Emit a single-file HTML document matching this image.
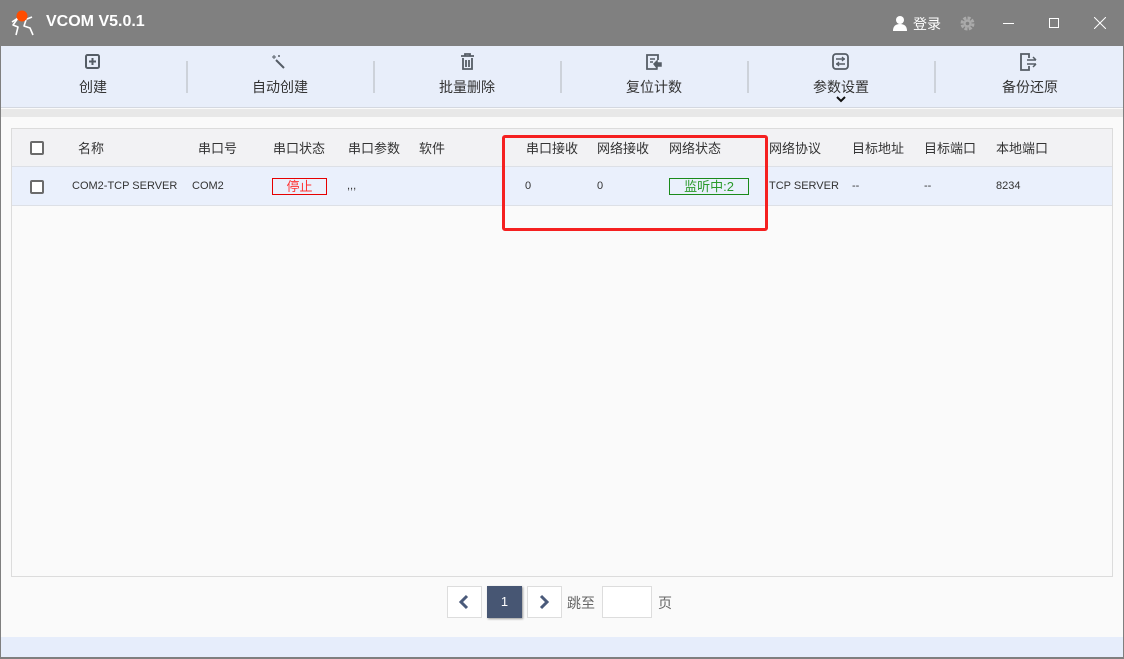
<!DOCTYPE html>
<html><head><meta charset="utf-8"><style>
*{margin:0;padding:0;box-sizing:border-box}
body{width:1124px;height:659px;overflow:hidden;background:#fafafa;font-family:"Liberation Sans","Noto Sans CJK SC",sans-serif;position:relative;color:#333}
.a{position:absolute}
.t{font-size:13px;white-space:nowrap}
</style></head><body>
<div class="a" style="left:0;top:0;width:1124px;height:659px;border:1px solid #7f7f7f;border-bottom-width:2px;border-top:none"></div>
<div class="a" style="left:0;top:0;width:1124px;height:46px;background:#808080"></div>
<svg class="a" style="left:9px;top:9px" width="30" height="28" viewBox="0 0 30 28"><path d="M3 13 L9 9 L18 10 L23 8 M9 9 L4 16 L9 18 L7 26 M17 11 L15 17 L21 19 L24 26" stroke="#fff" stroke-width="1.6" fill="none" stroke-linejoin="round"/><circle cx="13" cy="7" r="5.5" fill="#ff4c00"/></svg>
<div class="a" style="left:46px;top:13px;color:#fff;font-size:16px;font-weight:bold">VCOM V5.0.1</div>
<svg class="a" style="left:892px;top:15px" width="16" height="16"><circle cx="8" cy="5" r="4" fill="#fff"/><path d="M1 16 Q1 9 8 9 Q15 9 15 16Z" fill="#fff"/></svg>
<div class="a t" style="left:913px;top:14px;color:#fff;font-size:14px">登录</div>
<svg class="a" style="left:959px;top:15px" width="17" height="17" viewBox="0 0 17 17"><circle cx="8.5" cy="8.5" r="5.5" fill="none" stroke="#aaa" stroke-width="3" stroke-dasharray="3 1.3"/><circle cx="8.5" cy="8.5" r="4" fill="#aaa"/><circle cx="8.5" cy="8.5" r="1.8" fill="#808080"/></svg>
<div class="a" style="left:1003px;top:23px;width:11px;height:1px;background:#fff"></div>
<div class="a" style="left:1049px;top:18px;width:10px;height:10px;border:1px solid #fff"></div>
<svg class="a" style="left:1094px;top:17px" width="12" height="12"><path d="M0 0L12 12M12 0L0 12" stroke="#fff" stroke-width="1"/></svg>
<div class="a" style="left:1px;top:46px;width:1122px;height:62px;background:#e8eefa;border-bottom:1px solid #d4d8e0"></div>
<div class="a" style="left:1px;top:109px;width:1122px;height:8px;background:#e8e8e8"></div>
<div class="a" style="left:186px;top:61px;width:2px;height:32px;background:#cdd2da"></div>
<div class="a" style="left:373px;top:61px;width:2px;height:32px;background:#cdd2da"></div>
<div class="a" style="left:560px;top:61px;width:2px;height:32px;background:#cdd2da"></div>
<div class="a" style="left:747px;top:61px;width:2px;height:32px;background:#cdd2da"></div>
<div class="a" style="left:934px;top:61px;width:2px;height:32px;background:#cdd2da"></div>
<svg class="a" style="left:85px;top:54px" width="16" height="16"><rect x="1" y="1" width="13" height="13" rx="1.5" fill="none" stroke="#555d66" stroke-width="2"/><path d="M7.5 4v7M4 7.5h7" stroke="#555d66" stroke-width="2"/></svg>
<div class="a t" style="left:79px;top:77px;font-size:14px">创建</div>
<svg class="a" style="left:271px;top:54px" width="16" height="16"><path d="M5 6L13 14" stroke="#555d66" stroke-width="2"/><path d="M3 1v4M1 3h4M8 1v2M7 2h2" stroke="#555d66" stroke-width="1"/></svg>
<div class="a t" style="left:252px;top:77px;font-size:14px">自动创建</div>
<svg class="a" style="left:459px;top:53px" width="18" height="18"><path d="M2 3h13M6 3V1h5v2M4 5v11h9V5M7 7v7M10 7v7" stroke="#555d66" stroke-width="1.8" fill="none"/></svg>
<div class="a t" style="left:439px;top:77px;font-size:14px">批量删除</div>
<svg class="a" style="left:645px;top:53px" width="18" height="18"><path d="M12 16H2V2h11v5" stroke="#555d66" stroke-width="1.8" fill="none"/><path d="M5 6h5M5 9h3M9 11l3-3v2h4v3h-4v2z" stroke="#555d66" stroke-width="1.5" fill="#555d66"/></svg>
<div class="a t" style="left:626px;top:77px;font-size:14px">复位计数</div>
<svg class="a" style="left:832px;top:53px" width="18" height="18"><rect x="1" y="1" width="15" height="15" rx="3" fill="none" stroke="#555d66" stroke-width="1.8"/><path d="M4 6h9M4 11h9" stroke="#555d66" stroke-width="1.5"/><path d="M10 4l2 2-2 2M7 9l-2 2 2 2" stroke="#555d66" stroke-width="1.3" fill="none"/></svg>
<div class="a t" style="left:813px;top:77px;font-size:14px">参数设置</div>
<svg class="a" style="left:836px;top:96px" width="10" height="7"><path d="M1 1l4 4 4-4" stroke="#111" stroke-width="2" fill="none"/></svg>
<svg class="a" style="left:1019px;top:53px" width="20" height="18"><path d="M10 5V1H2v16h8v-4" stroke="#555d66" stroke-width="1.8" fill="none"/><path d="M8 7h9M8 11h9M14 4l3 3M14 14l3-3" stroke="#555d66" stroke-width="1.5" fill="none"/></svg>
<div class="a t" style="left:1002px;top:77px;font-size:14px">备份还原</div>
<div class="a" style="left:11px;top:128px;width:1102px;height:449px;border:1px solid #dcdcdc;background:#fafafa"></div>
<div class="a" style="left:12px;top:129px;width:1100px;height:38px;background:#f2f2f4;border-bottom:1px solid #dde0e6"></div>
<div class="a" style="left:12px;top:167px;width:1100px;height:39px;background:#eaf0fc;border-bottom:1px solid #dde0e6"></div>
<div class="a" style="left:30px;top:141px;width:14px;height:14px;border:2px solid #6b6b6b;border-radius:2px;background:#fff"></div>
<div class="a" style="left:30px;top:180px;width:14px;height:14px;border:2px solid #6b6b6b;border-radius:2px;background:#fff"></div>
<div class="a t" style="top:138px;left:78px">名称</div>
<div class="a t" style="top:138px;left:198px">串口号</div>
<div class="a t" style="top:138px;left:273px">串口状态</div>
<div class="a t" style="top:138px;left:348px">串口参数</div>
<div class="a t" style="top:138px;left:419px">软件</div>
<div class="a t" style="top:138px;left:526px">串口接收</div>
<div class="a t" style="top:138px;left:597px">网络接收</div>
<div class="a t" style="top:138px;left:669px">网络状态</div>
<div class="a t" style="top:138px;left:769px">网络协议</div>
<div class="a t" style="top:138px;left:852px">目标地址</div>
<div class="a t" style="top:138px;left:924px">目标端口</div>
<div class="a t" style="top:138px;left:996px">本地端口</div>
<div class="a t" style="top:180px;left:72px;font-size:11px">COM2-TCP SERVER</div>
<div class="a t" style="top:180px;left:192px;font-size:11px">COM2</div>
<div class="a t" style="top:178px;left:272px;width:55px;height:17px;border:1px solid #e60000;color:#f33;text-align:center;line-height:15px">停止</div>
<div class="a t" style="top:180px;left:347px;font-size:11px">,,,</div>
<div class="a t" style="top:180px;left:525px;font-size:11px">0</div>
<div class="a t" style="top:180px;left:597px;font-size:11px">0</div>
<div class="a t" style="top:178px;left:669px;width:80px;height:17px;border:1px solid #1a8a1a;color:#2a9a2a;text-align:center;line-height:15px">监听中:2</div>
<div class="a t" style="top:180px;left:769px;font-size:11px">TCP SERVER</div>
<div class="a t" style="top:180px;left:852px;font-size:11px">--</div>
<div class="a t" style="top:180px;left:924px;font-size:11px">--</div>
<div class="a t" style="top:180px;left:996px;font-size:11px">8234</div>
<div class="a" style="left:502px;top:135px;width:266px;height:96px;border:3px solid #f52020;border-radius:3px"></div>
<div class="a" style="left:447px;top:586px;width:35px;height:32px;border:1px solid #ddd;background:#fff"></div>
<svg class="a" style="left:458px;top:594px" width="12" height="16"><path d="M9 2L3 8l6 6" stroke="#4a5a7a" stroke-width="3" fill="none"/></svg>
<div class="a" style="left:487px;top:586px;width:35px;height:32px;background:#475673;color:#fff;font-size:13px;text-align:center;line-height:32px;box-shadow:1px 1px 2px #999">1</div>
<div class="a" style="left:527px;top:586px;width:35px;height:32px;border:1px solid #ddd;background:#fff"></div>
<svg class="a" style="left:538px;top:594px" width="12" height="16"><path d="M3 2l6 6-6 6" stroke="#4a5a7a" stroke-width="3" fill="none"/></svg>
<div class="a t" style="left:567px;top:593px;font-size:14px;color:#666">跳至</div>
<div class="a" style="left:602px;top:586px;width:50px;height:32px;border:1px solid #ddd;background:#fff"></div>
<div class="a t" style="left:658px;top:593px;font-size:14px;color:#666">页</div>
<div class="a" style="left:1px;top:637px;width:1122px;height:20px;background:#e6edfb"></div>
</body></html>
